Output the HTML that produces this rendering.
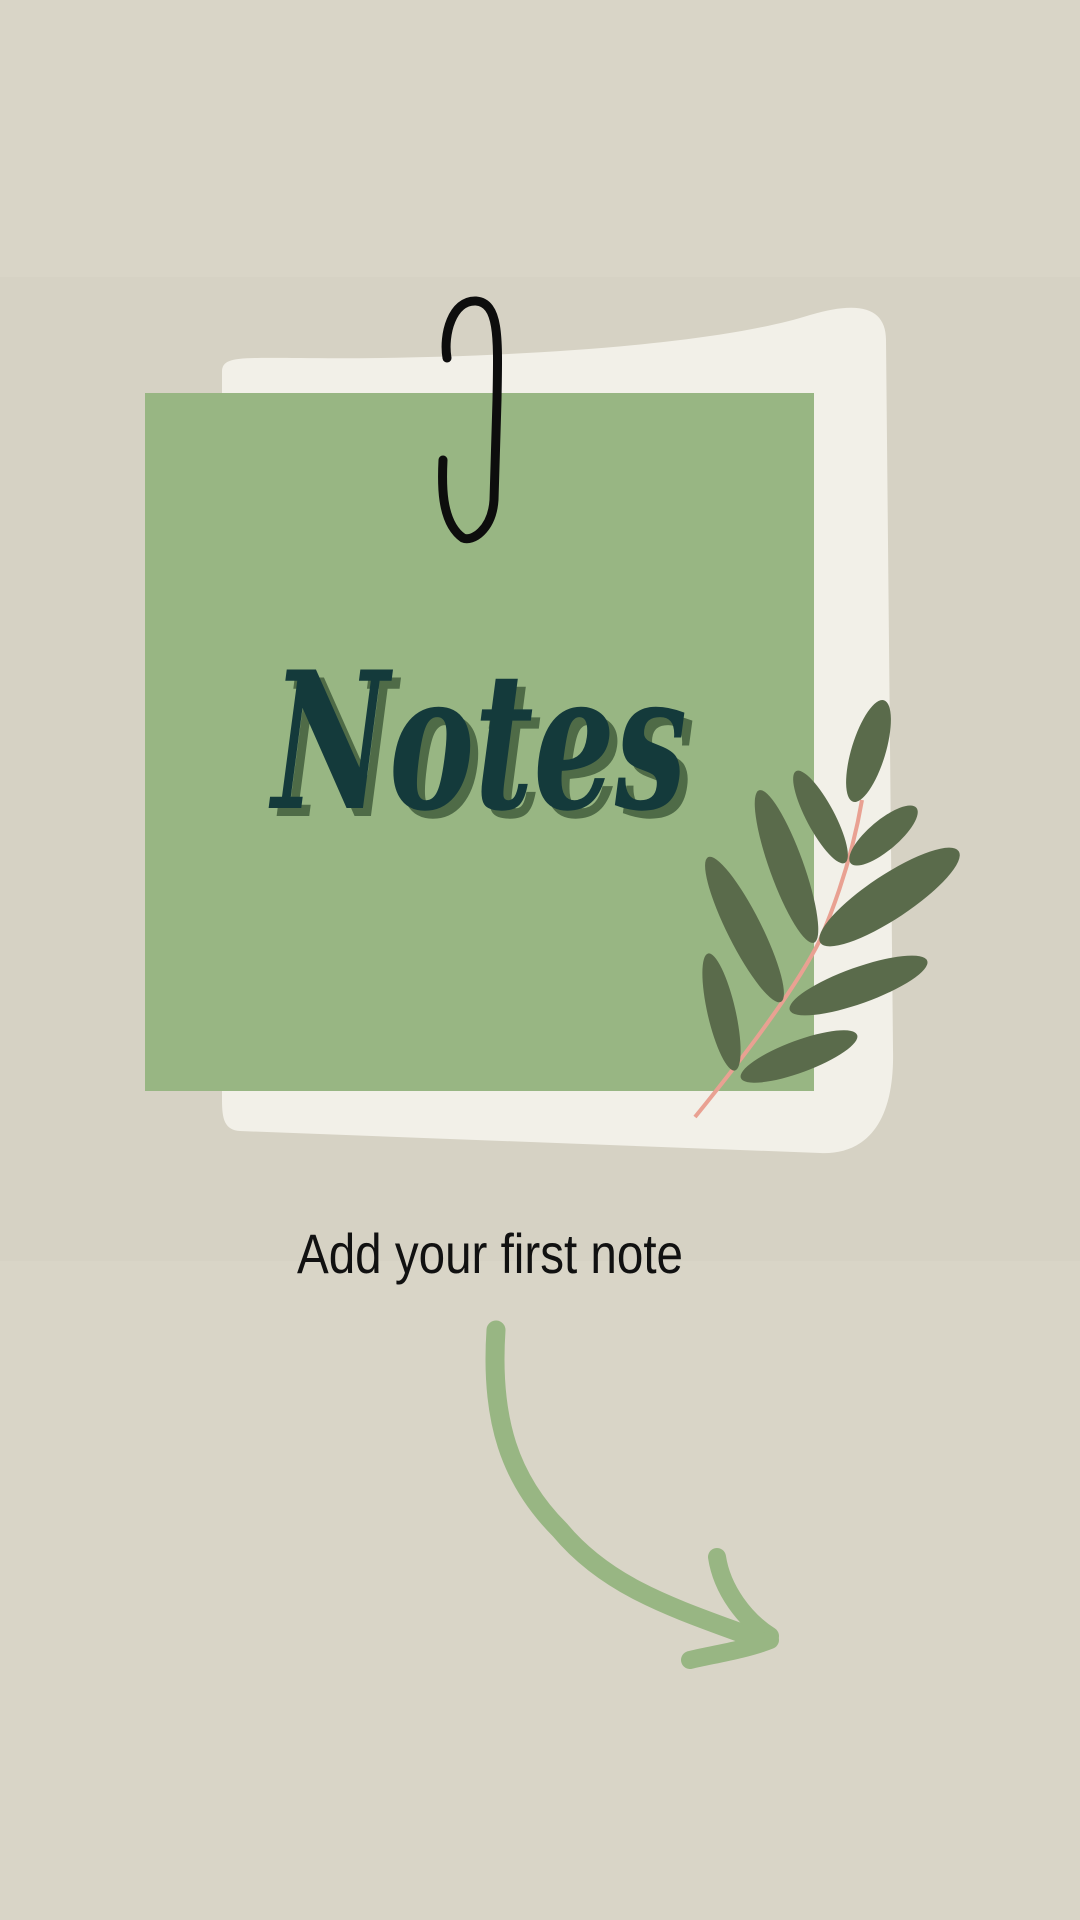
<!DOCTYPE html>
<html><head><meta charset="utf-8"><style>
html,body{margin:0;padding:0;background:#d9d5c7;}
svg{display:block}
</style></head><body>
<svg width="1080" height="1920" viewBox="0 0 1080 1920" xmlns="http://www.w3.org/2000/svg">
<rect width="1080" height="1920" fill="#d9d5c7"/>
<rect y="277" width="1080" height="984" fill="#d6d2c4"/>
<path d="M222,372 C222,356 240,358 300,358 C450,360 700,350 810,315 C860,300 886,308 886,340 L893,1050 C895,1130 860,1155 820,1153 L240,1131 C225,1130 222,1120 222,1100 Z" fill="#f2f0e8"/>
<rect x="145" y="393" width="669" height="698" fill="#98b683"/>
<path d="M447,358 C443,335 452,300 476,301 C500,303 498,340 497,400 L494,500 C492,530 472,542 463,538 C440,522 442,480 443,460" fill="none" stroke="#0d0d0d" stroke-width="9" stroke-linecap="round" stroke-linejoin="round"/>
<text x="280" y="816" font-family="'DejaVu Serif','Liberation Serif',serif" font-weight="bold" font-style="italic" font-size="190" textLength="415" lengthAdjust="spacingAndGlyphs" fill="#4f6b47">Notes</text>
<text x="272" y="808" font-family="'DejaVu Serif','Liberation Serif',serif" font-weight="bold" font-style="italic" font-size="190" textLength="415" lengthAdjust="spacingAndGlyphs" fill="#143a3b">Notes</text>
<path d="M695,1117 Q790,1000 820,940 Q850,870 862,800" fill="none" stroke="#e9a192" stroke-width="4"/>
<g fill="#5a6b4b">
<ellipse cx="868.5" cy="751" rx="53" ry="17" transform="rotate(106.9 868.5 751)"/>
<ellipse cx="820.5" cy="817" rx="52" ry="14" transform="rotate(62 820.5 817)"/>
<ellipse cx="883.5" cy="835.5" rx="43" ry="15" transform="rotate(139.8 883.5 835.5)"/>
<ellipse cx="786.5" cy="866.5" rx="81" ry="17" transform="rotate(70.2 786.5 866.5)"/>
<ellipse cx="889.5" cy="897" rx="83" ry="22" transform="rotate(146.5 889.5 897)"/>
<ellipse cx="744.5" cy="929.5" rx="81" ry="17" transform="rotate(63.3 744.5 929.5)"/>
<ellipse cx="858.5" cy="985.5" rx="73" ry="18" transform="rotate(160.3 858.5 985.5)"/>
<ellipse cx="721.5" cy="1012" rx="60" ry="14" transform="rotate(77.1 721.5 1012)"/>
<ellipse cx="799" cy="1056.5" rx="62" ry="16" transform="rotate(159.7 799 1056.5)"/>
</g>
<text x="297" y="1273" font-family="'Liberation Sans',sans-serif" font-size="56" textLength="386" lengthAdjust="spacingAndGlyphs" fill="#111">Add your first note</text>
<path d="M496,1330 C490,1420 510,1480 560,1530 C610,1590 680,1610 760,1640" fill="none" stroke="#98b683" stroke-width="19" stroke-linecap="round"/>
<path d="M717,1557 C722,1590 745,1620 770,1636" fill="none" stroke="#98b683" stroke-width="18" stroke-linecap="round"/>
<path d="M770,1640 C745,1650 710,1655 690,1660" fill="none" stroke="#98b683" stroke-width="18" stroke-linecap="round"/>
</svg>
</body></html>
